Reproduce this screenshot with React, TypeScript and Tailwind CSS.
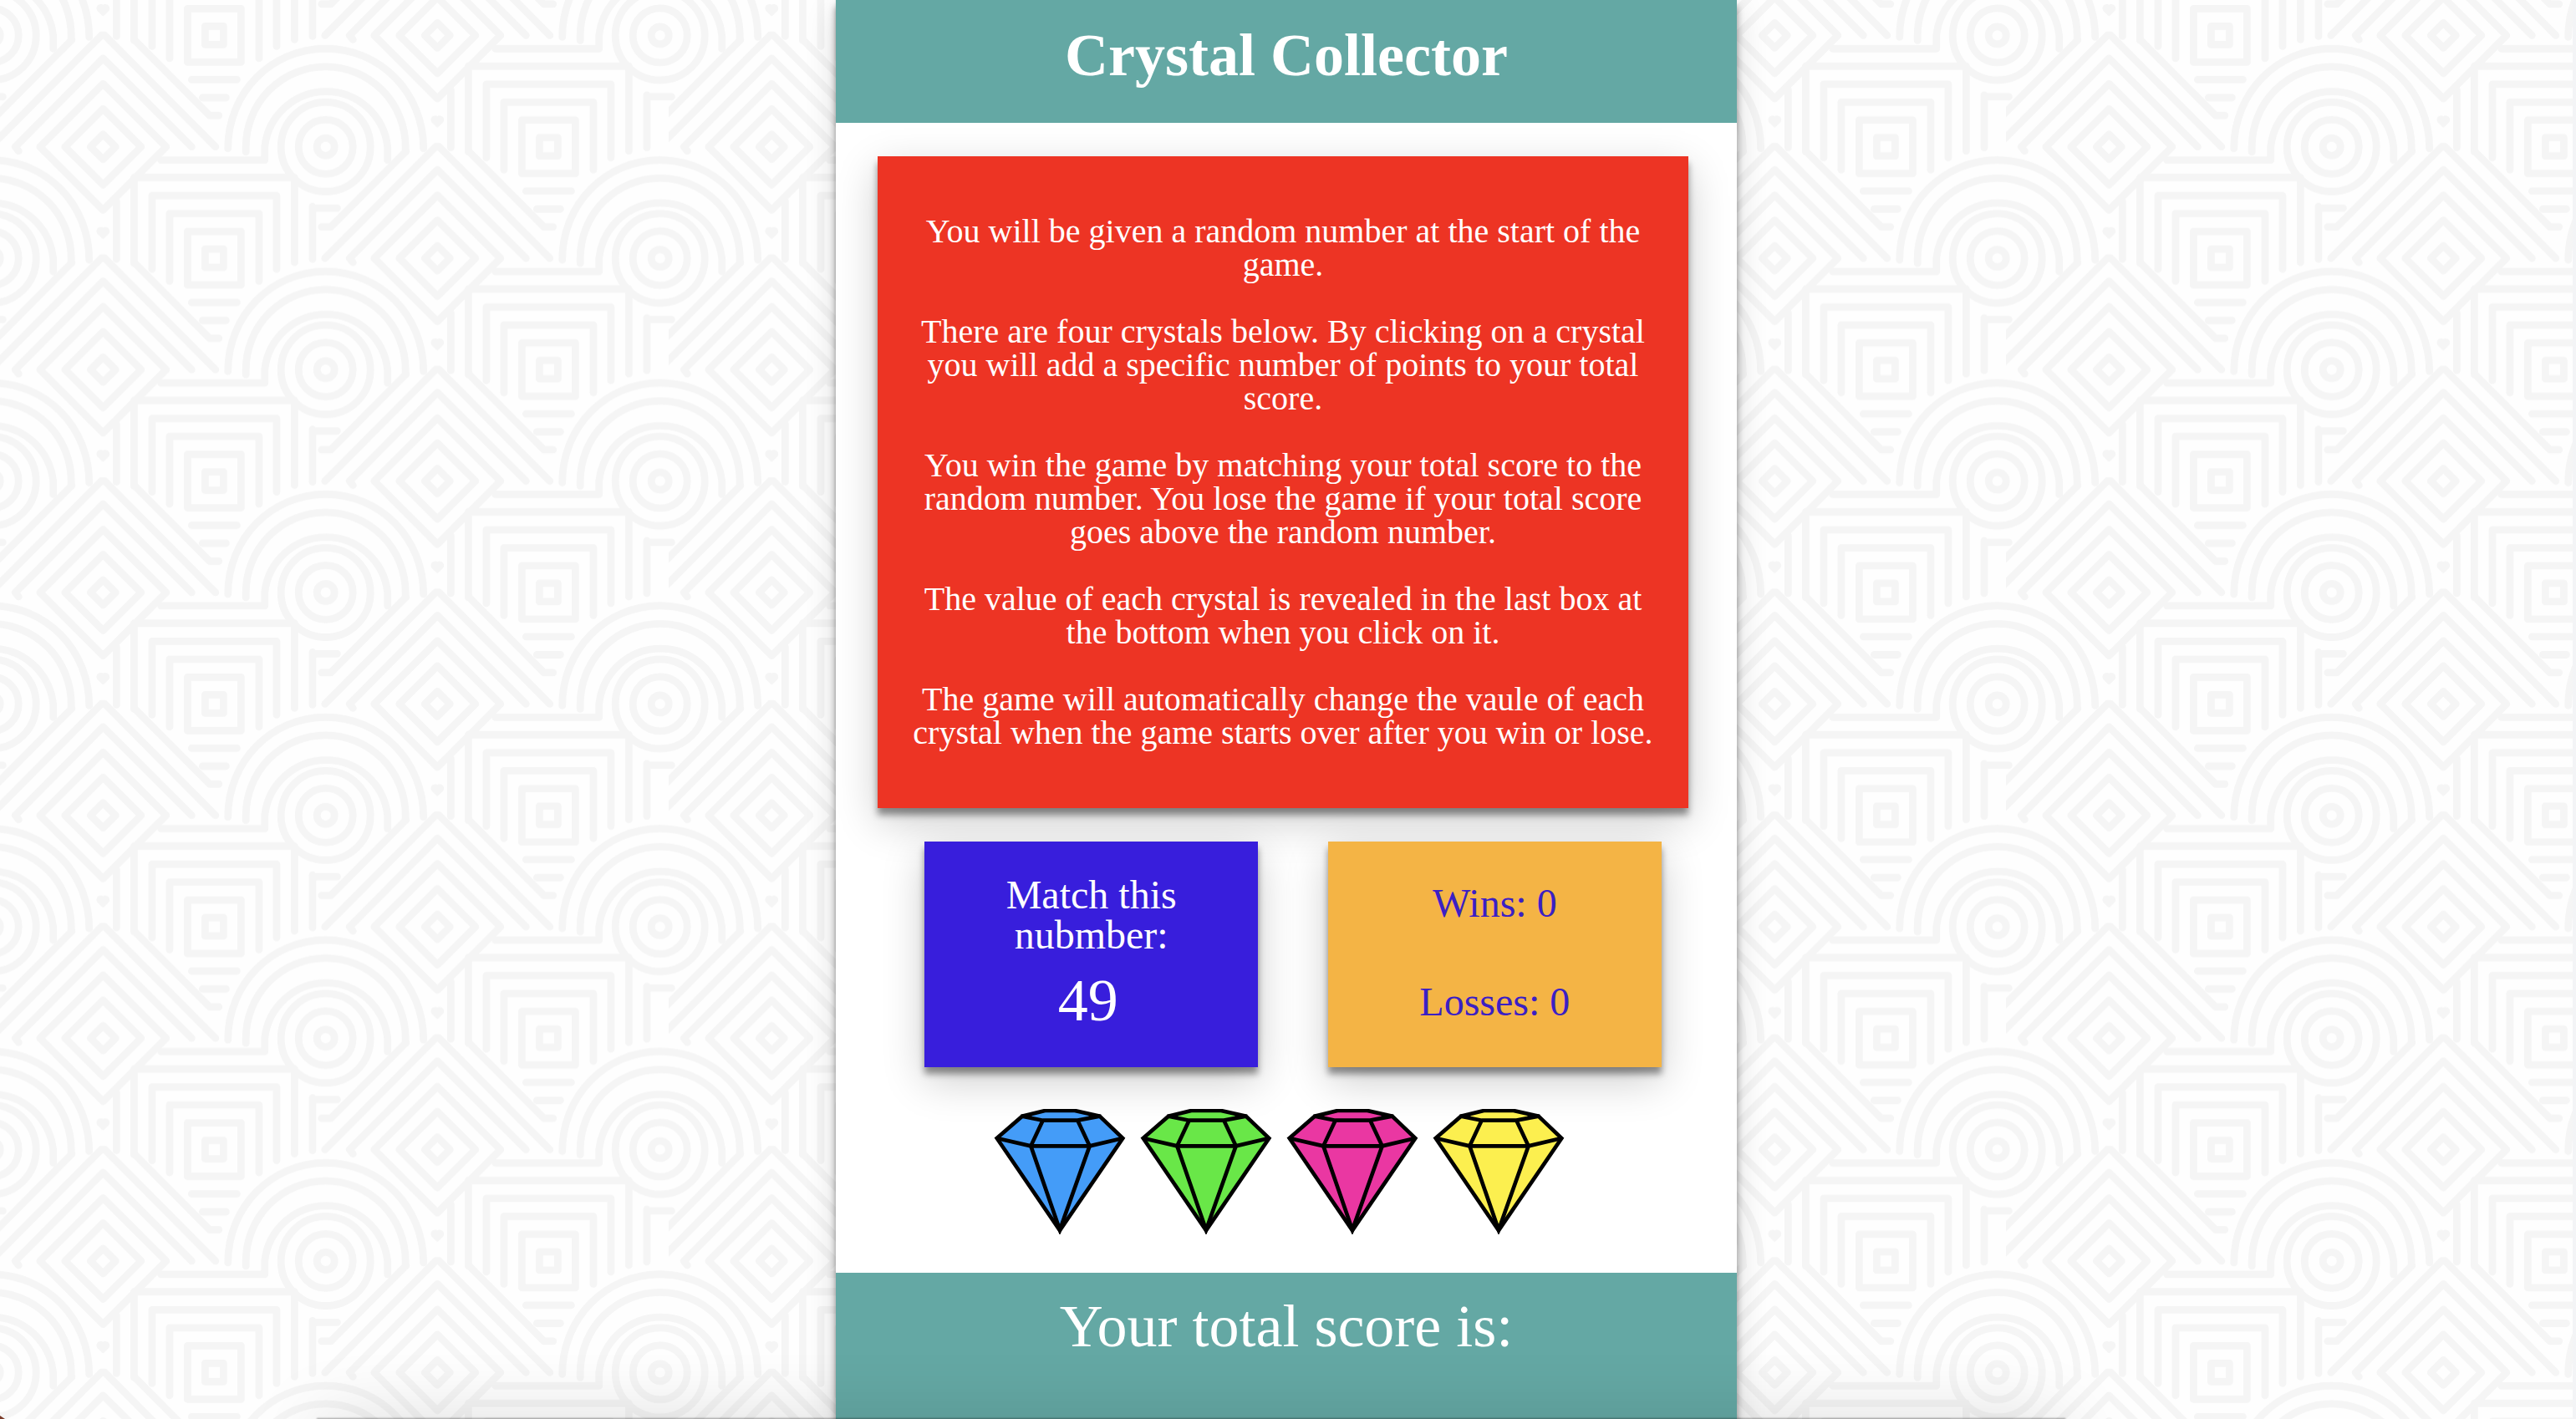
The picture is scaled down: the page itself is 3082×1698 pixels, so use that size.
import { useState } from "react";

const RULES = [
  "You will be given a random number at the start of the game.",
  "There are four crystals below. By clicking on a crystal you will add a specific number of points to your total score.",
  "You win the game by matching your total score to the random number. You lose the game if your total score goes above the random number.",
  "The value of each crystal is revealed in the last box at the bottom when you click on it.",
  "The game will automatically change the vaule of each crystal when the game starts over after you win or lose.",
];

const CRYSTALS = [
  { name: "Blue crystal", color: "#449cf8", points: 7 },
  { name: "Green crystal", color: "#69e748", points: 4 },
  { name: "Pink crystal", color: "#ea37a2", points: 11 },
  { name: "Yellow crystal", color: "#fcef4f", points: 2 },
];

const TILE_OFFSETS = [-2, -1, 0, 1].flatMap((col) =>
  [-2, -1, 0, 1].map((row) => ({
    x: col * 400,
    y: (row * 800) / 3 + (col % 2 !== 0 ? 400 / 3 : 0),
  })),
);

function Backdrop() {
  return (
    <svg className="absolute inset-0 -z-10 h-full w-full" aria-hidden="true">
      <defs>
        <g
          id="motif"
          fill="none"
          stroke="#f5f5f5"
          strokeWidth="8.8"
          strokeLinecap="round"
          strokeLinejoin="round"
        >
          {/* diamonds and chevrons */}
          <g transform="translate(123.3 175.7)">
            <path d="M0-15L15 0L0 15L-15 0Z" />
            <path d="M0-45.5L45.5 0L0 45.5L-45.5 0Z" />
            <path d="M0-75.5L75.5 0L0 75.5L-75.5 0Z" />
            <path d="M106 0L0-106L-105 0L-101 5" />
            <path d="M134.5 0L2-133.5H-2L-134.5 0" />
            <path d="M138.5-37.5H127.5L37.5-128" />
            <path d="M-138.5-37.5H-127.5L-37.5-128" />
            <path
              d="M0 108L-5.5 102.5A3 3 0 0 1 0 99.5A3 3 0 0 1 5.5 102.5Z"
              fill="#f5f5f5"
              strokeWidth="4"
            />
          </g>
          {/* circles and arcs */}
          <g transform="translate(389.7 175.7)">
            <circle r="10.5" />
            <circle r="32.5" />
            <circle r="53.5" />
            <path d="M-197 16H-73V0A74 75 0 0 1 74 0V16" />
            <path d="M-95.5 6V0A95.5 96 0 0 1 95.5 0V6" />
            <path d="M-117 2C-117-65-65-117.5 0-117.5S117-65 117 2" />
          </g>
          {/* squares */}
          <g transform="translate(256.4 309)">
            <rect x="-11" y="-11" width="22" height="22" />
            <rect x="-32" y="-32" width="64" height="64" />
            <path d="M-53.5 27.5V-53.5H53.5V27.5" />
            <path d="M-74.5 13V-75H74.5V13" />
            <path d="M-96 6V-96.5H96V5" />
            <path d="M-117-68V1M117.5-62V1M117.5-60H147" />
            <path d="M-27 53H27M-14 74.5H14" />
          </g>
        </g>
        <pattern id="tiles" width="800" height={800 / 3} patternUnits="userSpaceOnUse">
          {TILE_OFFSETS.map((t) => (
            <use key={`${t.x}:${t.y}`} href="#motif" x={t.x} y={t.y} />
          ))}
        </pattern>
      </defs>
      <rect width="100%" height="100%" fill="url(#tiles)" />
    </svg>
  );
}

function Crystal({ color }: { color: string }) {
  return (
    <svg viewBox="24 50 474 450" className="h-[150px] w-[158px]" aria-hidden="true">
      <g fill="none" stroke="#000" strokeWidth="14">
        <path fill={color} d="M35 155L126 76L208 56H315L404 76L487 155L261 486Z" />
        <path d="M126 76L200 91H325L404 76" />
        <path d="M35 155L157 183H368L487 155" />
        <path d="M200 91L157 183L261 484L368 183L325 91" />
      </g>
      <path d="M120 70L160 66V80H130ZM410 70L365 66V80H400Z" />
    </svg>
  );
}

export default function App() {
  const [score, setScore] = useState<number | null>(null);

  return (
    <div className="relative isolate flex h-screen overflow-hidden border-r-4 border-gray-100 bg-[#fefefe] font-['Liberation_Serif',serif]">
      <Backdrop />
      <main className="mx-auto flex w-[35%] flex-col bg-white text-center text-white shadow-[0_8px_8px_rgba(0,0,0,0.42),0_12px_36px_rgba(0,0,0,0.14)]">
        <header className="h-[147px] shrink-0 bg-[#64a8a4] pt-6">
          <h1 className="text-7xl leading-[84px] font-bold">Crystal Collector</h1>
        </header>

        <section className="mt-10 mr-[58px] ml-[50px] flex flex-col gap-10 bg-[#ed3424] px-9 py-[70px] text-[40px] leading-10 shadow-[0_8px_8px_rgba(0,0,0,0.42),0_16px_48px_rgba(0,0,0,0.2)]">
          {RULES.map((rule) => (
            <p key={rule}>{rule}</p>
          ))}
        </section>

        <div className="mt-10 mr-[90px] ml-[106px] grid grid-cols-2 gap-[84px] text-5xl leading-12">
          <section className="flex h-[270px] flex-col items-center bg-[#381edc] px-16 pt-10 shadow-[0_8px_8px_rgba(0,0,0,0.42),0_16px_48px_rgba(0,0,0,0.2)]">
            <h2>Match this nubmber:</h2>
            <p className="mt-[18px] pr-2 text-7xl leading-[72px]">49</p>
          </section>
          <section className="flex h-[270px] flex-col items-center gap-[70px] bg-[#f4b445] pt-[50px] text-[#3b20c4] shadow-[0_8px_8px_rgba(0,0,0,0.42),0_16px_48px_rgba(0,0,0,0.2)]">
            <p>Wins: 0</p>
            <p>Losses: 0</p>
          </section>
        </div>

        <div className="mt-[50px] mr-4 flex justify-center gap-[17px]">
          {CRYSTALS.map((c) => (
            <button
              key={c.name}
              type="button"
              aria-label={c.name}
              onClick={() => setScore((score ?? 0) + c.points)}
              className="cursor-pointer"
            >
              <Crystal color={c.color} />
            </button>
          ))}
        </div>

        <footer className="mt-[46px] grow bg-[#64a8a4] pt-[22px]">
          <p className="text-7xl leading-[84px]">Your total score is:</p>
          <p className="text-7xl leading-[84px]">{score}</p>
        </footer>
      </main>
      <div className="pointer-events-none absolute -bottom-12 left-[380px] h-12 w-[2090px] shadow-[0_10px_90px_rgba(0,0,0,0.2),0_0_2px_1px_rgba(0,0,0,0.35)]" />
      <svg viewBox="0 0 6 4" className="absolute bottom-0 left-0 h-1 w-1.5" aria-hidden="true">
        <path d="M0 0L6 4H0Z" fill="#7a3a28" />
      </svg>
    </div>
  );
}
